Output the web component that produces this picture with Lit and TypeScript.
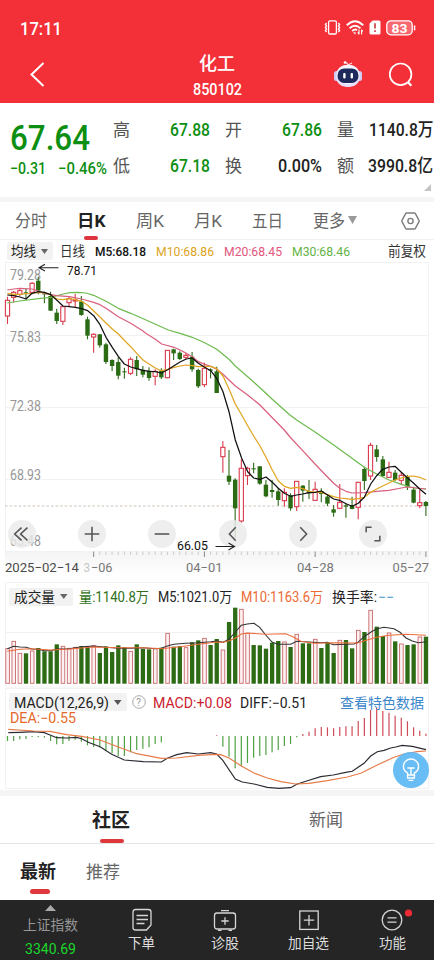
import { LitElement, html, svg, css } from "lit";
import { customElement } from "lit/decorators.js";

type Pt = [number, number];
type Candle = [string, number, number, number, number];

const STEP = 6.153;
const X0 = 7.5;
const xAt = (i: number) => X0 + STEP * i;

// Series are digitised at three units per pixel, in blocks with their own origin.
const block = (ox: number, oy: number, pts: Pt[]): Pt[] =>
  pts.map(([x, y]) => [ox + x / 3, oy + y / 3] as Pt);
const bars = (oy: number, rows: Candle[]): Candle[] =>
  rows.map(([k, ...v]) => [k, ...v.map((n) => oy + n / 3)] as Candle);
const line = (pts: Pt[]) =>
  "M" + pts.map(([x, y]) => x.toFixed(1) + " " + y.toFixed(1)).join("L");

const candles: Candle[] = [
  ...bars(260, [
    ["r", 110, 121, 168, 192], ["r", 93, 97, 112, 128], ["r", 86, 92, 103, 108], ["g", 86, 97, 101, 118],
    ["r", 66, 70, 97, 103], ["g", 50, 62, 92, 103], ["g", 95, 100, 103, 130], ["g", 95, 108, 152, 152],
    ["g", 146, 158, 183, 192], ["r", 138, 140, 184, 195], ["r", 110, 116, 128, 140], ["r", 102, 120, 123, 143],
    ["g", 108, 124, 165, 167], ["g", 170, 178, 227, 238], ["r", 220, 223, 231, 278], ["g", 222, 223, 256, 263],
    ["g", 248, 253, 306, 312], ["g", 298, 300, 318, 333], ["g", 290, 306, 347, 358], ["g", 323, 334, 337, 356],
    ["r", 292, 298, 340, 345], ["g", 288, 300, 328, 348], ["g", 318, 329, 344, 352],
  ]),
  ...bars(330, [
    ["g", 112, 122, 144, 152], ["r", 118, 124, 139, 166], ["g", 115, 122, 142, 147], ["r", 60, 61, 143, 145],
    ["g", 56, 58, 70, 90], ["g", 64, 68, 87, 90], ["r", 70, 76, 82, 88], ["g", 66, 80, 118, 125],
    ["g", 116, 120, 169, 174], ["r", 98, 115, 164, 172], ["g", 115, 118, 122, 145], ["g", 110, 124, 189, 189],
    ["r", 333, 352, 380, 428], ["g", 360, 437, 455, 465], ["g", 445, 449, 535, 625], ["r", 388, 415, 573, 578],
    ["r", 410, 415, 437, 465], ["g", 398, 415, 418, 430], ["g", 408, 409, 461, 464], ["g", 450, 464, 499, 502],
    ["g", 450, 480, 486, 503], ["g", 475, 484, 510, 527], ["r", 475, 487, 512, 530], ["g", 490, 496, 535, 542],
  ]),
  ...bars(420, [
    ["r", 183, 184, 260, 273], ["g", 195, 197, 212, 245], ["g", 180, 213, 220, 237], ["r", 185, 208, 241, 243],
    ["g", 205, 213, 222, 247], ["g", 225, 230, 251, 258], ["g", 255, 268, 278, 290], ["r", 192, 247, 265, 268],
    ["g", 250, 256, 260, 293], ["g", 230, 255, 267, 268], ["r", 185, 187, 262, 298], ["g", 140, 147, 183, 210],
    ["r", 68, 76, 168, 180], ["g", 75, 88, 111, 125], ["g", 108, 118, 168, 170], ["r", 125, 157, 172, 173],
    ["g", 150, 158, 180, 183], ["r", 155, 166, 181, 195], ["g", 165, 171, 200, 210], ["g", 200, 209, 248, 250],
    ["r", 210, 248, 257, 265], ["g", 243, 246, 258, 288],
  ]),
];

const ma5 = line([
  ...block(0, 260, [[22, 105], [41, 107], [60, 111], [78, 117], [96, 100], [115, 95], [133, 97], [152, 104], [170, 120], [189, 138], [208, 140], [226, 142], [245, 146], [263, 152], [281, 167], [300, 194], [318, 232], [337, 262], [355, 289], [373, 312], [392, 321], [410, 326], [429, 331]]),
  ...block(145, 330, [[12, 124], [31, 125], [49, 129], [68, 119], [87, 107], [105, 96], [124, 87], [142, 84], [160, 100], [179, 112], [197, 122], [215, 145], [234, 185], [252, 245], [271, 330], [290, 385], [308, 425], [326, 444], [345, 448], [363, 441], [382, 457], [400, 475], [418, 490], [437, 499]]),
  ...block(290, 420, [[20, 225], [38, 222], [57, 218], [75, 217], [94, 213], [112, 224], [131, 237], [149, 241], [168, 251], [186, 259], [205, 250], [223, 232], [242, 192], [260, 167], [278, 148], [297, 141], [315, 139], [334, 157], [352, 173], [371, 190], [389, 207], [408, 223]]),
]);
const ma10 = line([
  ...block(0, 260, [[22, 100], [41, 103], [60, 103], [78, 101], [96, 100], [115, 97], [133, 98], [152, 105], [170, 117], [189, 119], [208, 116], [226, 119], [245, 124], [263, 136], [281, 153], [300, 171], [318, 189], [337, 207], [355, 222], [373, 241], [392, 260], [410, 280], [429, 300]]),
  ...block(145, 330, [[12, 102], [31, 114], [49, 122], [68, 118], [87, 112], [105, 108], [124, 105], [142, 107], [160, 110], [179, 109], [197, 109], [215, 116], [234, 138], [252, 177], [271, 222], [290, 255], [308, 287], [326, 318], [345, 348], [363, 382], [382, 420], [400, 453], [418, 469], [437, 475]]),
  ...block(290, 420, [[2, 205], [20, 202], [38, 206], [57, 214], [75, 216], [94, 217], [112, 224], [131, 230], [149, 234], [168, 236], [186, 238], [205, 236], [223, 232], [242, 217], [260, 207], [278, 198], [297, 189], [315, 180], [334, 174], [352, 169], [371, 168], [389, 172], [408, 180]]),
]);
const ma20 = line([
  ...block(0, 260, [[22, 90], [41, 87], [60, 85], [96, 87], [115, 93], [133, 100], [170, 107], [208, 110], [245, 117], [281, 127], [300, 134], [318, 145], [355, 170], [392, 190], [429, 213]]),
  ...block(145, 330, [[0, 8], [31, 28], [50, 42], [87, 52], [105, 60], [124, 70], [142, 80], [160, 95], [179, 103], [197, 109], [215, 118], [234, 133], [271, 168], [308, 195], [345, 225], [382, 263], [418, 300]]),
  ...block(290, 420, [[0, 51], [38, 92], [75, 132], [112, 170], [131, 190], [149, 205], [168, 214], [186, 219], [223, 218], [260, 214], [297, 211], [334, 204], [352, 201], [408, 207]]),
]);
const ma30 = line([
  ...block(0, 260, [[22, 129], [60, 123], [115, 116], [152, 112], [189, 102], [210, 98], [235, 97], [258, 99], [281, 106], [318, 124], [355, 145], [392, 160], [450, 185]]),
  ...block(145, 330, [[70, 0], [105, 10], [142, 22], [179, 38], [215, 58], [252, 88], [271, 108], [308, 140], [345, 173], [382, 208], [418, 240]]),
  ...block(290, 420, [[0, -15], [20, 0], [75, 36], [131, 75], [186, 115], [223, 142], [260, 162], [297, 180], [334, 193], [371, 204], [408, 207]]),
]);

const volTops = [
  206, 184, 220, 220, 213, 204, 214, 214, 193, 199, 205, 202, 198, 198, 197, 219, 199, 216, 196, 202, 214, 193, 207,
  208, 205, 203, 160, 200, 198, 203, 187, 181, 175, 195, 177, 210, 126, 83, 88, 160, 195, 196, 206, 188, 183, 186,
  201, 163, 190, 190, 178, 204, 189, 219, 181, 180, 205, 151, 156, 91, 140, 168, 159, 184, 192, 195, 193, 171, 170,
];
const volRed = new Set([0, 1, 2, 4, 9, 10, 11, 14, 20, 24, 26, 29, 32, 35, 38, 39, 45, 47, 50, 54, 57, 59, 62, 64, 67]);
const vol5 = line([
  ...block(0, 580, [[22, 206], [41, 199], [60, 201], [78, 202], [96, 207], [115, 208], [133, 212], [152, 212], [170, 207], [208, 206], [245, 200], [281, 198], [318, 202], [355, 205], [392, 205], [429, 203], [466, 206], [484, 205], [502, 198], [521, 193], [558, 190], [595, 188], [632, 185]]),
  ...block(214, 580, [[8, 183], [27, 187], [45, 178], [64, 156], [82, 136], [100, 132], [120, 130], [137, 142], [155, 165], [175, 187], [192, 193], [230, 193], [248, 184], [285, 186], [322, 188], [340, 187], [358, 194], [395, 193], [420, 192], [432, 187], [450, 170], [470, 157], [487, 147], [510, 142], [540, 146], [558, 157], [576, 174], [595, 183], [613, 188], [636, 185]]),
]);
const vol10 = line([
  ...block(0, 580, [[22, 214], [60, 208], [96, 206], [152, 210], [208, 207], [281, 201], [355, 203], [429, 203], [484, 206], [540, 200], [595, 193]]),
  ...block(214, 580, [[8, 186], [27, 187], [45, 182], [64, 175], [82, 162], [100, 159], [155, 163], [215, 161], [240, 172], [260, 184], [300, 190], [360, 188], [430, 189], [450, 183], [487, 172], [525, 166], [576, 163], [636, 166]]),
]);

const macd = [
  168, 168, 163, 162, 156, 157, 158, 168, 178, 177, 168, 164, 170, 181, 186, 187, 196, 205, 213, 213, 202, 195, 191,
  187, 177, 172, 153, 153, 153, 153, 153, 153, 153, 153, 151, 185, 215, 250, 243, 234, 218, 213, 210, 202, 195, 183,
  177, 157, 147, 140, 130, 126, 127, 130, 126, 124, 124, 108, 99, 75, 68, 78, 83, 92, 98, 109, 127, 137, 146,
];
const diff = line([
  ...block(0, 685, [[25, 143], [60, 142], [100, 140], [133, 143], [150, 150], [170, 158], [200, 159], [230, 157], [245, 161], [265, 172], [300, 185], [335, 208], [373, 225], [430, 230], [484, 231], [502, 220], [530, 209], [560, 203], [595, 207], [632, 203], [650, 207]]),
  ...block(214, 685, [[10, 209], [27, 227], [64, 282], [85, 291], [120, 297], [160, 307], [195, 310], [230, 308], [248, 298], [285, 286], [320, 275], [358, 270], [395, 262], [415, 259], [450, 235], [470, 213], [490, 200], [510, 196], [530, 189], [545, 186], [565, 181], [595, 184], [636, 194]]),
]);
const dea = line([
  ...block(0, 685, [[25, 133], [100, 138], [150, 139], [200, 149], [245, 154], [300, 165], [355, 186], [410, 206], [484, 220], [530, 219], [595, 211]]),
  ...block(214, 685, [[5, 208], [20, 209], [45, 219], [82, 243], [120, 264], [160, 279], [200, 290], [245, 297], [285, 295], [340, 287], [400, 276], [440, 265], [490, 240], [540, 217], [570, 207], [610, 200], [636, 198]]),
]);

// A line of text condensed to a given width, its glyphs centred in the box.
const label = (text: string, width: number, size: number, cls = "") => html`<svg
  class="label ${cls}" width=${width} height=${size * 1.2}>
  <text x="0" y=${size * 0.98} font-size=${size} textLength=${width} lengthAdjust="spacingAndGlyphs">${text}</text>
</svg>`;

const fit = (text: string, x: number, cy: number, width: number, size: number, cls: string) =>
  svg`<text class=${cls} x=${x} y=${cy + size * 0.36} font-size=${size} textLength=${width} lengthAdjust="spacingAndGlyphs">${text}</text>`;

const caret = (w: number, h: number, color: string) =>
  html`<svg width=${w} height=${h} viewBox="0 0 10 6" preserveAspectRatio="none"><path d="M0 0H10L5 6Z" fill=${color} /></svg>`;

const shared = css`
  :host { display: block; font-family: Roboto, "Noto Sans CJK SC", sans-serif; }
  svg { display: block; flex: none; overflow: visible; }
  .label { fill: currentColor; }
  .b { font-weight: 700; }
  .m { font-weight: 500; }
  .chip { display: flex; align-items: center; gap: 5px; height: 18px; background: #f2f2f3; color: #222; border-radius: 2px; }
`;

@customElement("top-header")
class TopHeader extends LitElement {
  static styles = [shared, css`
    :host { height: 103px; background: #f32f38; color: #fff; }
    .status { display: flex; align-items: center; height: 55px; padding: 0 18px 0 20px; }
    .signals { display: flex; align-items: center; gap: 5px; margin-left: auto; }
    .nav { display: grid; grid-template-columns: 114px 1fr 114px; height: 48px; }
    .back { padding: 7px 0 0 30px; }
    .title { display: flex; flex-direction: column; align-items: center; gap: 5px; margin-top: -3px; }
    .tools { display: flex; gap: 26px; padding: 5px 0 0 14px; }
  `];
  render() {
    return html`
      <div class="status">
        ${label("17:11", 42, 18, "m")}
        <div class="signals">
          <svg width="17" height="15" viewBox="0 0 17 15" fill="none" stroke="#fff" stroke-width="1.3">
            <rect x="4.6" y=".8" width="7.8" height="13.2" rx="1.3" />
            <path d="M2.6 3L1.4 4.5L2.6 6L1.4 7.5L2.6 9L1.4 10.5L2.6 12M14.4 3L15.6 4.5L14.4 6L15.6 7.5L14.4 9L15.6 10.5L14.4 12" />
          </svg>
          <svg width="18" height="15" viewBox="0 0 18 15" fill="none" stroke="#fff" stroke-width="1.9">
            <path d="M.8 5.2Q9-2.8 17.2 5.2M3.6 8.2Q9 3.2 14.4 8.2M6.2 11Q9 8.6 11 10.2" />
            <path d="M7 12L9 14.4L10.2 12.8Z" fill="#fff" stroke="none" />
            <path d="M13 9.5V14.5M15.6 14.5V9.5M11.8 12.4L13 14.2M16.8 11.4L15.6 9.8" stroke-width="1.1" />
          </svg>
          <svg width="12" height="15" viewBox="0 0 12 15">
            <path d="M3.6 .5H10Q11.5 .5 11.5 2V13Q11.5 14.5 10 14.5H2Q.5 14.5 .5 13V3.6Z" fill="#fff" />
            <path d="M6 3.3V8.6M6 10.3V12" stroke="#c62832" stroke-width="1.5" />
          </svg>
          <svg width="30" height="16" viewBox="0 0 30 16">
            <rect x=".8" y=".8" width="25.4" height="14" rx="4" fill="#fff" fill-opacity=".28" stroke="#fff" stroke-width="1.3" />
            <path d="M28.6 5.5V10.3" stroke="#fff" stroke-width="1.5" />
            <text x="5.6" y="12.6" font-size="13" font-weight="700" fill="#fff" textLength="16" lengthAdjust="spacingAndGlyphs">83</text>
          </svg>
        </div>
      </div>
      <div class="nav">
        <div class="back">
          <svg width="15" height="25" viewBox="0 0 15 25"><path d="M13.5 1L1.5 12.5L13.5 24" fill="none" stroke="#fff" stroke-width="2" /></svg>
        </div>
        <div class="title">${label("化工", 36, 18.5, "m")}${label("850102", 49, 16, "m")}</div>
        <div class="tools">
          <svg width="28" height="28" viewBox="0 0 28 28">
            <path d="M14 6Q14 2.6 10.8 2.4M14 5L18 3" fill="none" stroke="#ffd9e2" stroke-width="1.3" />
            <circle cx="11" cy="2.5" r="1.3" fill="#fff" />
            <rect x="0" y="11" width="5" height="10" rx="2.5" fill="#cfcdf3" />
            <rect x="23" y="11" width="5" height="10" rx="2.5" fill="#cfcdf3" />
            <rect x="2" y="5" width="24" height="22" rx="10.5" fill="#e6e1fa" />
            <rect x="3" y="5" width="22" height="19" rx="9.5" fill="#f7f7ff" />
            <rect x="3.6" y="8.4" width="20.8" height="14.6" rx="6.5" fill="#1f2a5c" />
            <rect x="9.2" y="13" width="2.4" height="5.4" rx="1" fill="#fff" />
            <rect x="16.6" y="13" width="2.4" height="5.4" rx="1" fill="#fff" />
          </svg>
          <svg width="26" height="27" viewBox="0 0 26 27" fill="none" stroke="#fff" stroke-width="1.7">
            <circle cx="12.6" cy="14.3" r="10.8" /><path d="M19.8 22L23.4 25.8" stroke-width="2.2" />
          </svg>
        </div>
      </div>`;
  }
}

@customElement("quote-summary")
class QuoteSummary extends LitElement {
  static styles = [shared, css`
    :host { height: 94px; display: flex; position: relative; background: #fff; border-bottom: 5px solid #f5f5f6; }
    .price { width: 103px; padding: 12px 0 0 10px; color: #0d8f12; }
    .delta { display: flex; justify-content: space-between; width: 97px; }
    .grid { display: grid; grid-template: 36px 36px / 97px 97px 96px; column-gap: 15px; padding-top: 8px; }
    .cell { display: flex; align-items: center; justify-content: space-between; color: #222; }
    .cell .name { color: #555; }
    .cell .down { color: #0d8f12; }
    .corner { position: absolute; right: 3px; bottom: 6px; }
  `];
  render() {
    const cells: [string, string, number, boolean][] = [
      ["高", "67.88", 40, true], ["开", "67.86", 40, true], ["量", "1140.8万", 64.5, false],
      ["低", "67.18", 40, true], ["换", "0.00%", 44, false], ["额", "3990.8亿", 65, false],
    ];
    return html`
      <div class="price">
        ${label("67.64", 80, 35.5, "m")}
        <div class="delta">${label("−0.31", 36, 16, "m")}${label("−0.46%", 49, 16, "m")}</div>
      </div>
      <div class="grid">
        ${cells.map(([n, v, w, d]) => html`<div class="cell">${label(n, 17, 17, "name")}${label(v, w, 18, d ? "down m" : "m")}</div>`)}
      </div>
      <svg class="corner" width="7" height="7"><path d="M7 0V7H0Z" fill="#c4c4c4" /></svg>`;
  }
}

@customElement("period-tabs")
class PeriodTabs extends LitElement {
  static styles = [shared, css`
    :host { display: flex; align-items: center; gap: 30px; height: 37px; padding: 0 14px 0 15px; color: #666; border-bottom: 1px solid #f2f2f2; }
    .tab { position: relative; display: flex; align-items: center; gap: 3px; }
    .tab.on { color: #222; }
    .tab.on::after { content: ""; position: absolute; left: 7px; bottom: -9px; width: 14px; height: 3.5px; border-radius: 2px; background: #dc3540; }
    .gear { margin-left: auto; }
  `];
  render() {
    return html`
      <div class="tab">${label("分时", 32, 17)}</div>
      <div class="tab on">${label("日K", 28.5, 17, "b")}</div>
      <div class="tab">${label("周K", 28, 17)}</div>
      <div class="tab">${label("月K", 28, 17)}</div>
      <div class="tab">${label("五日", 31, 17)}</div>
      <div class="tab">${label("更多", 32, 17)}${caret(9, 8, "#999")}</div>
      <svg class="gear" width="19" height="18" viewBox="0 0 19 18" fill="none" stroke="#7c7c7c" stroke-width="1.4">
        <path d="M5.6 1H13.4Q14 1 14.4 1.6L18 8.3Q18.4 9 18 9.7L14.4 16.4Q14 17 13.4 17H5.6Q5 17 4.6 16.4L1 9.7Q.6 9 1 8.3L4.6 1.6Q5 1 5.6 1Z" />
        <circle cx="9.5" cy="9" r="2.6" />
      </svg>`;
  }
}

@customElement("price-chart")
class PriceChart extends LitElement {
  static styles = [shared, css`
    .legend { display: flex; align-items: center; height: 22px; padding: 0 8px 0 7px; gap: 10px; }
    .chip { padding: 0 5px 0 4px; margin-right: -3px; }
    .adj { margin-left: auto; color: #333; }
    .day { color: #333; }
    .m5 { color: #111; } .m10 { color: #dda41c; } .m20 { color: #e2557c; } .m30 { color: #63b443; }
    .plot { position: relative; height: 318px; }
    .axis { fill: #969696; } .date { fill: #777; } .dark { fill: #4a4a4a; } .mark { fill: #111; } .faint { fill: #c6c6c6; }
    .buttons { position: absolute; left: 8px; top: 258px; display: flex; gap: 42.2px; }
    .button { display: flex; align-items: center; justify-content: center; width: 28px; height: 28px; border-radius: 50%; background: rgba(234, 234, 234, 0.82); }
    .marks { position: absolute; left: 0; top: 0; pointer-events: none; }
  `];
  render() {
    const icons = [
      "M10.5 4L3 11L10.5 18M17 4L9.5 11L17 18", "M3 11H19M11 3V19", "M3 11H19",
      "M14 3.500L7 11L14 18.500", "M8 3.500L15 11L8 18.500", "M3.500 9V3.500H9.500M18.500 13V18.500H12.500",
    ];
    return html`
      <div class="legend">
        <div class="chip">${label("均线", 25, 13.2)}${caret(7, 5, "#666")}</div>
        ${label("日线", 25, 13.2, "day")}
        ${label("M5:68.18", 51, 13.4, "m5 m")}
        ${label("M10:68.86", 58, 13.4, "m10")}
        ${label("M20:68.45", 58, 13.4, "m20")}
        ${label("M30:68.46", 58, 13.4, "m30")}
        ${label("前复权", 38, 13.2, "adj")}
      </div>
      <div class="plot">
        <svg width="434" height="318" viewBox="0 262 434 318">
          <defs><linearGradient id="fade" x1="0" y1="0" x2="0" y2="1">
            <stop offset="0" stop-color="#f4f4f5" /><stop offset="1" stop-color="#fff" />
          </linearGradient></defs>
          <rect x="5" y="551" width="424" height="26" fill="url(#fade)" />
          <path d="M5 262.5H428.5M5 335.5H428.5M5 407.5H428.5M5 479.5H428.5M5 551.5H428.5M5.5 262V551M428.5 262V551" stroke="#f2f2f2" fill="none" />
          ${fit("79.28", 10, 274.5, 31, 14, "axis")}
          ${fit("75.83", 10, 336.5, 31, 14, "axis")}
          ${fit("72.38", 10, 405.5, 31, 14, "axis")}
          ${fit("68.93", 10, 474.5, 31, 14, "axis")}
          ${fit("65.48", 10, 540.5, 31, 14, "axis")}
          <path d="M5 506H428" stroke="#cfc4ba" stroke-dasharray="2.6 2" />
          ${candles.map(([k, hi, top, bot, lo], i) => {
            const x = xAt(i);
            return k === "r"
              ? svg`<path d="M${x} ${hi}V${top}M${x} ${bot}V${lo}" stroke="#d93a4c" stroke-width="1.1" />
                <rect x=${x - 2.1} y=${top} width="4.2" height=${bot - top} fill="#fff" stroke="#d93a4c" stroke-width="1.1" />`
              : svg`<path d="M${x} ${hi}V${lo}" stroke="#2f6b1c" stroke-width="1.1" />
                <rect x=${x - 2.2} y=${top} width="4.4" height=${bot - top} fill="#2a6b14" />`;
          })}
          <g fill="none" stroke-width="1.25" stroke-linejoin="round">
            <path d=${ma30} stroke="#6ebb50" /><path d=${ma20} stroke="#d9617e" />
            <path d=${ma10} stroke="#dfa520" /><path d=${ma5} stroke="#111" />
          </g>
          ${Array.from({ length: 55 }, (_, n) => {
            const i = n + 14, major = n % 18 === 0;
            return svg`<path d="M${xAt(i)} 551.5V${major ? 557 : 555}" stroke=${major ? "#8a8a8a" : "#ccc"} />`;
          })}
          ${fit("2025−02−14", 5, 567.5, 74, 13.4, "dark")}
          ${fit("3", 83.5, 567.5, 6.5, 13.4, "faint")}
          ${fit("−06", 91, 567.5, 21.5, 13.4, "date")}
          ${fit("04−01", 186, 567.5, 36.5, 13.4, "date")}
          ${fit("04−28", 297, 567.5, 37, 13.4, "date")}
          ${fit("05−27", 392.5, 567.5, 36.5, 13.4, "date")}
        </svg>
        <div class="buttons">
          ${icons.map((d) => html`<div class="button"><svg width="20" height="20" viewBox="0 0 22 22"><path d=${d} fill="none" stroke="#555" stroke-width="1.7" /></svg></div>`)}
        </div>
        <svg class="marks" width="434" height="318" viewBox="0 262 434 318">
          <g fill="none" stroke="#222" stroke-width="1.1">
            <path d="M39 267.8H58.5M45 264.2L39 267.8L45 271" />
            <path d="M215.5 546.5H234M228.5 543L234.5 546.5L228.5 550" />
          </g>
          ${fit("78.71", 67, 270.5, 30, 12.6, "mark")}
          ${fit("66.05", 177, 545.5, 31, 12.6, "mark")}
        </svg>
      </div>`;
  }
}

@customElement("volume-chart")
class VolumeChart extends LitElement {
  static styles = [shared, css`
    :host { position: relative; height: 107px; }
    .legend { position: absolute; top: 7px; left: 9px; display: flex; align-items: center; height: 19px; gap: 9px; color: #222; }
    .chip { padding: 0 5px; margin-right: -3px; }
    .vol { color: #2f7020; } .m10 { color: #ec6a35; } .turn { display: flex; gap: 1px; } .none { color: #3f9ac8; }
  `];
  render() {
    return html`
      <svg width="434" height="107" viewBox="0 580 434 107">
        <path d="M5.5 582.5H428.5V687H5.5ZM5 632.5H428" stroke="#f2f2f2" fill="none" />
        ${volTops.map((v, i) => {
          const x = xAt(i), y = 580 + v / 3;
          return volRed.has(i)
            ? svg`<rect x=${x - 1.7} y=${y} width="3.6" height=${683.3 - y} fill="#fdf0f0" stroke="#c9696b" stroke-width=".9" />`
            : svg`<rect x=${x - 2.1} y=${y} width="4.3" height=${683.7 - y} fill="#2d6b14" />`;
        })}
        <g fill="none" stroke-width="1.1"><path d=${vol5} stroke="#333" /><path d=${vol10} stroke="#ee6c3c" /></g>
      </svg>
      <div class="legend">
        <div class="chip">${label("成交量", 41, 14)}${caret(7.5, 5, "#666")}</div>
        ${label("量:1140.8万", 70, 14, "vol")}
        ${label("M5:1021.0万", 74, 14)}
        ${label("M10:1163.6万", 82, 14, "m10")}
        <div class="turn">${label("换手率:", 45, 14)}${label("−−", 16, 14, "none")}</div>
      </div>`;
  }
}

@customElement("macd-chart")
class MacdChart extends LitElement {
  static styles = [shared, css`
    :host { position: relative; height: 103px; border-bottom: 6px solid #f5f5f6; }
    .legend { position: absolute; top: 6px; left: 9px; right: 10px; display: flex; align-items: center; height: 18px; color: #222; }
    .chip { padding: 0 5px; }
    .help { margin: 0 7px 0 5px; }
    .up { color: #cb2130; margin-right: 8px; }
    .link { color: #3d87cb; margin-left: auto; }
    .dea { position: absolute; left: 10px; top: 21.5px; color: #e5692b; }
    .tip { position: absolute; left: 392.5px; top: 65px; display: flex; align-items: center; justify-content: center; width: 36px; height: 36px; border-radius: 50%; background: rgba(93, 184, 244, 0.93); }
  `];
  render() {
    return html`
      <svg width="434" height="103" viewBox="0 687 434 103">
        <path d="M5.5 688.5H428.5V788.5H5.5Z" stroke="#f2f2f2" fill="none" />
        ${macd.map((v, i) => {
          const x = xAt(i);
          return v === 153 ? null : svg`<path d="M${x} 736V${685 + v / 3}" stroke=${v > 153 ? "#4fa044" : "#d04b58"} stroke-width="1.2" />`;
        })}
        <g fill="none" stroke-width="1.2"><path d=${diff} stroke="#2b2b33" /><path d=${dea} stroke="#e87b48" /></g>
      </svg>
      <div class="legend">
        <div class="chip">${label("MACD(12,26,9)", 95, 14)}${caret(7.5, 5, "#555")}</div>
        <svg class="help" width="14" height="14" viewBox="0 0 14 14">
          <circle cx="7" cy="7" r="6.3" fill="none" stroke="#aaa" />
          <text x="4.3" y="10.6" font-size="10" fill="#999">?</text>
        </svg>
        ${label("MACD:+0.08", 79, 14, "up")}
        ${label("DIFF:−0.51", 67, 14)}
        ${label("查看特色数据", 84, 14, "link")}
      </div>
      <div class="dea">${label("DEA:−0.55", 66, 14)}</div>
      <div class="tip">
        <svg width="18" height="24" viewBox="0 0 18 24" fill="none" stroke="#fff" stroke-width="1.4">
          <path d="M5.6 17V14.8Q1.4 12.6 1.4 8.4A7.6 7.4 0 0 1 16.6 8.4Q16.6 12.6 12.4 14.8V17Z" />
          <path d="M5.4 10H12.6M9 10V17M5.6 17V20H12.4V17M6.6 22.4H11.4" />
        </svg>
      </div>`;
  }
}

@customElement("community-panel")
class CommunityPanel extends LitElement {
  static styles = [shared, css`
    :host { height: 104px; color: #666; }
    .main { display: flex; gap: 179px; align-items: center; height: 47px; padding-left: 92px; border-bottom: 1px solid #e4e4e4; }
    .sub { display: flex; gap: 30px; align-items: center; height: 54px; padding-left: 20px; }
    .tab { position: relative; }
    .on { color: #222; }
    .on::after { content: ""; position: absolute; border-radius: 3px; background: #df383c; height: 4.5px; }
    .main .on::after { left: 8px; width: 23.5px; bottom: -12px; }
    .sub .on::after { left: 10px; width: 19.5px; bottom: -11.5px; }
  `];
  render() {
    return html`
      <div class="main"><div class="tab on">${label("社区", 38, 19.5, "b")}</div><div class="tab">${label("新闻", 34, 17.3)}</div></div>
      <div class="sub"><div class="tab on">${label("最新", 36, 18.5, "b")}</div><div class="tab">${label("推荐", 34, 17.3)}</div></div>`;
  }
}

@customElement("bottom-bar")
class BottomBar extends LitElement {
  static styles = [shared, css`
    :host { display: grid; grid-template-columns: 100px repeat(4, 83.5px); height: 60px; background: #252525; color: #ddd; }
    .index { display: flex; flex-direction: column; align-items: center; padding-top: 5px; }
    .name { color: #969696; margin: 5px 0 6px; }
    .value { color: #1cd72c; }
    .item { display: flex; flex-direction: column; align-items: center; padding-top: 8px; gap: 1.5px; }
  `];
  render() {
    const items: [string, number, unknown][] = [
      ["下单", 27, svg`<path d="M5.5 1.500H18.500Q21 1.500 21 4V17L16.500 22H5.500Q3 22 3 19.500V4Q3 1.500 5.500 1.500Z" /><path d="M6.500 7.500H18M6.500 11.500H18M6.500 15.500H14.500" />`],
      ["诊股", 28, svg`<rect x="1.500" y="5" width="21" height="16" rx="2.500" /><path d="M8 2.700H16M12 9.300V16.700M8.300 13H15.700M5 22.300H8.500M15.500 22.300H19" />`],
      ["加自选", 41, svg`<rect x="2.800" y="3" width="18.400" height="18.400" /><path d="M12 7V17.400M6.800 12.200H17.200" />`],
      ["功能", 27, svg`<circle cx="12" cy="12" r="9.800" /><path d="M7.500 9.800H16.500M7.500 14.200H16.500" /><circle cx="28.500" cy="5" r="3.600" fill="#ee2b35" stroke="none" />`],
    ];
    return html`
      <div class="index">
        <svg width="11" height="6"><path d="M0 6L5.5 0L11 6Z" fill="#aaa" /></svg>
        ${label("上证指数", 55, 14, "name")}${label("3340.69", 51, 15, "value")}
      </div>
      ${items.map(([name, w, icon]) => html`<div class="item">
        <svg width="24" height="24" viewBox="0 0 24 24" fill="none" stroke="#d6d6d6" stroke-width="1.3">${icon}</svg>
        ${label(name, w, 13.8)}
      </div>`)}`;
  }
}

@customElement("app-root")
class AppRoot extends LitElement {
  static styles = css`
    :host { display: flex; flex-direction: column; width: 434px; height: 960px; overflow: hidden; background: #fff; }
  `;
  render() {
    return html`<top-header></top-header><quote-summary></quote-summary><period-tabs></period-tabs><price-chart></price-chart>
      <volume-chart></volume-chart><macd-chart></macd-chart><community-panel></community-panel><bottom-bar></bottom-bar>`;
  }
}
